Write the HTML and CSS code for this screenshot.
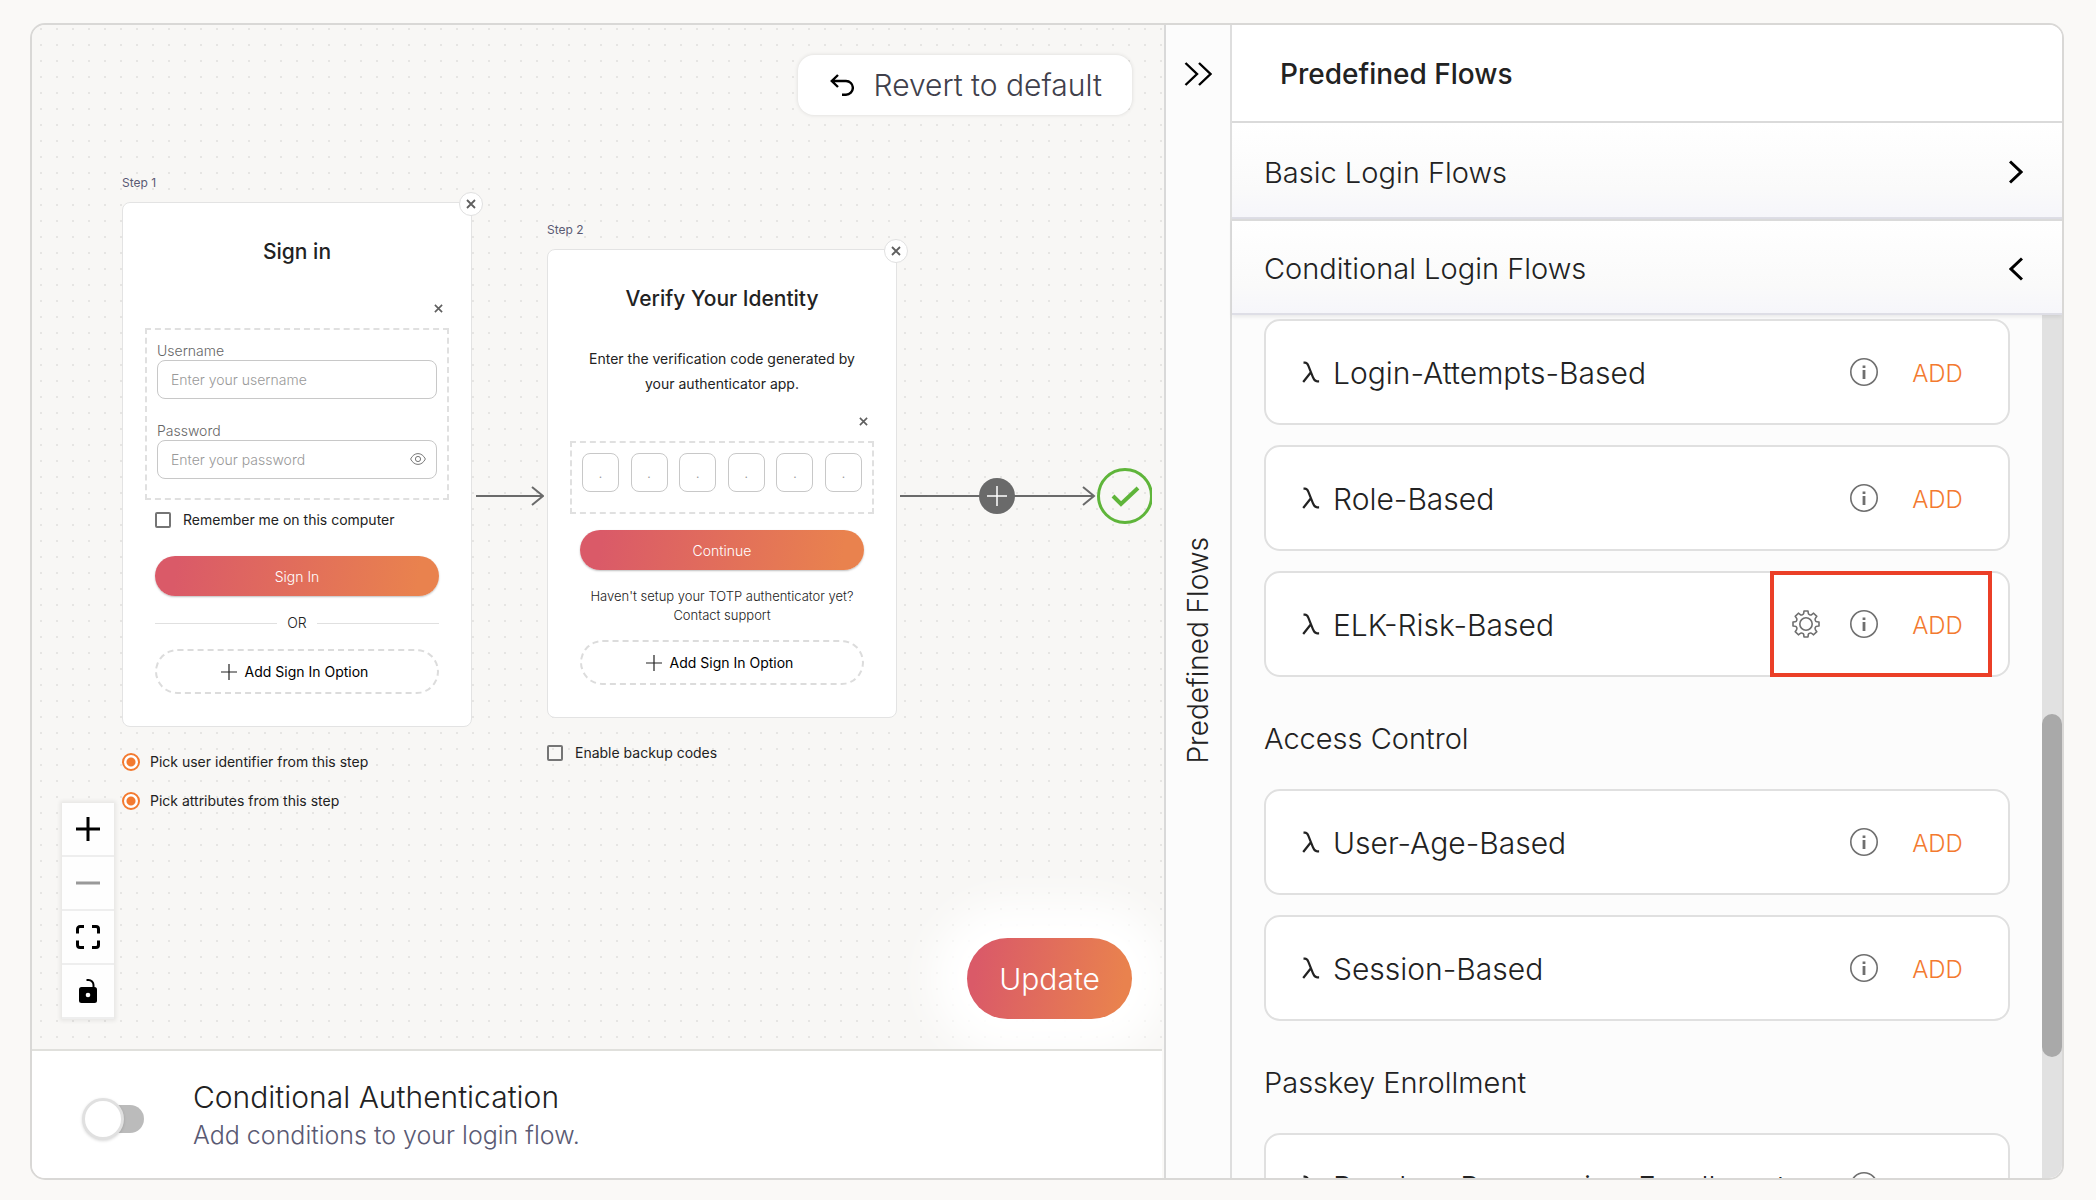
FILE: index.html
```html
<!DOCTYPE html>
<html lang="en">
<head>
<meta charset="utf-8">
<title>Login Flow</title>
<link rel="stylesheet" href="styles.css">
</head>
<body>
<svg class="defs" aria-hidden="true">
  <symbol id="cross" viewBox="0 0 10 10"><path d="M1 1l8 8M9 1l-8 8" fill="none" stroke="#5f5f5f" stroke-width="1.8"/></symbol>
  <symbol id="plus" viewBox="0 0 16 16"><path d="M8 0v16M0 8h16" fill="none" stroke="#222" stroke-width="1.2"/></symbol>
  <symbol id="lambda" viewBox="0 0 18 22"><path d="M1.5 1.6h1.4c1.7 0 2.6 1 3.4 3l4.6 11.600c1 2.600 2.200 4.200 4.200 4.200h2M9.300 10.800L1.200 21" fill="none" stroke="#222" stroke-width="2.200"/></symbol>
  <symbol id="info" viewBox="0 0 28 28"><circle cx="14" cy="14" r="13.200" fill="none" stroke="#6f6f6f" stroke-width="1.600"/><path d="M14 12v9M14 7.400v2.600" stroke="#6f6f6f" stroke-width="2.800"/></symbol>
  <symbol id="gear" viewBox="0 0 28 28"><path d="M11.700 3.300L12 1h4l.3 2.300c0 .8.600 1.200 1.300 1.400.8.300 1.500.4 2.100-.1l1.900-1.400 3.200 3.200-1.400 1.900c-.5.600-.4 1.300-.1 2.100.2.700.6 1.300 1.400 1.300L27 12v4l-2.300.3c-.8 0-1.200.6-1.400 1.300-.3.800-.4 1.500.1 2.100l1.400 1.900-3.200 3.200-1.900-1.400c-.6-.5-1.300-.4-2.100-.1-.7.200-1.300.6-1.300 1.400L16 27h-4l-.3-2.300c0-.8-.6-1.200-1.300-1.400-.8-.3-1.500-.4-2.100.1l-1.900 1.400-3.200-3.200 1.400-1.900c.5-.6.4-1.300.1-2.100-.2-.7-.6-1.300-1.400-1.300L1 16v-4l2.300-.3c.8 0 1.200-.6 1.400-1.300.3-.8.4-1.500-.1-2.100L3.200 6.400l3.200-3.200 1.900 1.400c.6.500 1.300.4 2.100.1.700-.2 1.300-.6 1.300-1.400z" fill="none" stroke="#6f6f6f" stroke-width="1.600" stroke-linejoin="round"/><circle cx="14" cy="14" r="6.200" fill="none" stroke="#6f6f6f" stroke-width="1.600"/></symbol>
</svg>

<main class="builder">
  <section class="workspace">
    <div class="canvas">
      <svg class="edge edge-first" width="68" height="20" viewBox="0 0 68 20" fill="none" stroke="#6a6a6a" stroke-width="2"><path d="M0 10h67M56 1l11 9-11 9"/></svg>
      <svg class="edge edge-last" width="252" height="58" viewBox="0 0 252 58" fill="none">
        <path d="M0 29h194M183 20l11 9-11 9" stroke="#6a6a6a" stroke-width="2"/>
        <circle cx="97" cy="29" r="18" fill="#6a6a6a"/>
        <path d="M97 19v20M87 29h20" stroke="#fff" stroke-width="1.500"/>
        <circle cx="225" cy="29" r="26.500" stroke="#5fb53a" stroke-width="3"/>
        <path d="M213 29l8 8 17-16" stroke="#5fb53a" stroke-width="4"/>
      </svg>

      <article class="step step-one">
        <p class="step-label">Step 1</p>
        <form class="card">
          <button type="button" class="close" aria-label="Remove step"><svg width="10" height="10"><use href="#cross"/></svg></button>
          <h2 class="card-title">Sign in</h2>
          <div class="remove-row"><button type="button" class="remove" aria-label="Remove option"><svg width="9" height="9"><use href="#cross"/></svg></button></div>
          <div class="option">
            <label class="field-label" for="user">Username</label>
            <input class="field" id="user" type="text" placeholder="Enter your username">
            <label class="field-label field-next" for="pass">Password</label>
            <div class="field-wrap">
              <input class="field" id="pass" type="password" placeholder="Enter your password">
              <svg class="eye" width="16" height="12" viewBox="0 0 16 12" fill="none" stroke="#777"><path d="M.6 6C2.500 2.400 5 .6 8 .6S13.500 2.400 15.400 6C13.500 9.600 11 11.400 8 11.400S2.500 9.600.6 6z"/><circle cx="8" cy="6" r="2.600"/></svg>
            </div>
          </div>
          <label class="check remember"><input type="checkbox">Remember me on this computer</label>
          <button type="button" class="primary primary-signin">Sign In</button>
          <div class="or">OR</div>
          <button type="button" class="add-option"><svg width="16" height="16"><use href="#plus"/></svg>Add Sign In Option</button>
        </form>
        <div class="step-options">
          <label class="check"><input type="radio" name="identifier" checked>Pick user identifier from this step</label>
          <label class="check"><input type="radio" name="attributes" checked>Pick attributes from this step</label>
        </div>
      </article>

      <article class="step step-two">
        <p class="step-label">Step 2</p>
        <form class="card">
          <button type="button" class="close" aria-label="Remove step"><svg width="10" height="10"><use href="#cross"/></svg></button>
          <h2 class="card-title">Verify Your Identity</h2>
          <p class="lead">Enter the verification code generated by<br>your authenticator app.</p>
          <div class="remove-row remove-code"><button type="button" class="remove" aria-label="Remove option"><svg width="9" height="9"><use href="#cross"/></svg></button></div>
          <div class="option code">
            <input class="digit" aria-label="Digit 1" placeholder=".">
            <input class="digit" aria-label="Digit 2" placeholder=".">
            <input class="digit" aria-label="Digit 3" placeholder=".">
            <input class="digit" aria-label="Digit 4" placeholder=".">
            <input class="digit" aria-label="Digit 5" placeholder=".">
            <input class="digit" aria-label="Digit 6" placeholder=".">
          </div>
          <button type="button" class="primary">Continue</button>
          <p class="note">Haven't setup your TOTP authenticator yet?<br>Contact support</p>
          <button type="button" class="add-option"><svg width="16" height="16"><use href="#plus"/></svg>Add Sign In Option</button>
        </form>
        <div class="step-options">
          <label class="check"><input type="checkbox">Enable backup codes</label>
        </div>
      </article>

      <button type="button" class="revert">
        <svg width="24" height="22" viewBox="0 0 24 22" fill="none" stroke="#000" stroke-width="2.400"><path d="M8 1L1.800 7 8 13M1.800 7H16a6.800 6.800 0 0 1 0 13.700h-4"/></svg>
        Revert to default
      </button>

      <div class="controls">
        <button type="button" aria-label="Zoom in"><svg width="24" height="24" viewBox="0 0 24 24"><path d="M12 0v24M0 12h24" stroke="#000" stroke-width="3"/></svg></button>
        <button type="button" aria-label="Zoom out"><svg width="24" height="24" viewBox="0 0 24 24"><path d="M0 12h24" stroke="#999" stroke-width="3"/></svg></button>
        <button type="button" aria-label="Fit view"><svg width="24" height="24" viewBox="0 0 24 24" fill="none" stroke="#000" stroke-width="3"><path d="M1.500 8.500V4a2.500 2.500 0 0 1 2.500-2.500h4M16 1.500h4A2.500 2.500 0 0 1 22.500 4v4.500M22.500 15.500V20a2.500 2.500 0 0 1-2.500 2.500h-4M8 22.500H4A2.500 2.500 0 0 1 1.500 20v-4.500"/></svg></button>
        <button type="button" aria-label="Unlock"><svg width="20" height="24" viewBox="0 0 20 24"><rect x="1" y="8" width="18" height="16" rx="2.500"/><circle cx="10" cy="16" r="2.300" fill="#fff"/><path d="M8.500 1h2a5 5 0 0 1 5 5v3" fill="none" stroke="#000" stroke-width="2"/></svg></button>
      </div>

      <button type="button" class="update">Update</button>
    </div>

    <div class="conditional">
      <input class="switch" type="checkbox" role="switch" id="conditional">
      <label for="conditional">
        <span class="conditional-title">Conditional Authentication</span>
        <span class="conditional-text">Add conditions to your login flow.</span>
      </label>
    </div>
  </section>

  <aside class="panel">
    <div class="rail">
      <button type="button" class="collapse" aria-label="Collapse panel"><svg width="28" height="24" viewBox="0 0 28 24" fill="none" stroke="#000" stroke-width="2.400"><path d="M1.500 1L13 12 1.500 23M15 1l11.500 11L15 23"/></svg></button>
      <span class="rail-title">Predefined Flows</span>
    </div>
    <div class="flows">
      <h1 class="flows-title">Predefined Flows</h1>
      <button type="button" class="group">Basic Login Flows<svg width="14" height="24" viewBox="0 0 14 24" fill="none" stroke="#000" stroke-width="3"><path d="M1 1.500L12 12 1 22.500"/></svg></button>
      <button type="button" class="group group-open">Conditional Login Flows<svg width="14" height="24" viewBox="0 0 14 24" fill="none" stroke="#000" stroke-width="3"><path d="M13 1.500L2 12 13 22.500"/></svg></button>
      <div class="scroller">
        <div class="list">
          <div class="flow"><svg width="18" height="22"><use href="#lambda"/></svg><span class="flow-name">Login-Attempts-Based</span><svg width="28" height="28"><use href="#info"/></svg><button type="button" class="add">ADD</button></div>
          <div class="flow"><svg width="18" height="22"><use href="#lambda"/></svg><span class="flow-name">Role-Based</span><svg width="28" height="28"><use href="#info"/></svg><button type="button" class="add">ADD</button></div>
          <div class="flow"><svg width="18" height="22"><use href="#lambda"/></svg><span class="flow-name">ELK-Risk-Based</span><svg width="28" height="28"><use href="#gear"/></svg><svg width="28" height="28"><use href="#info"/></svg><button type="button" class="add">ADD</button><span class="marker"></span></div>
          <h2 class="list-title">Access Control</h2>
          <div class="flow"><svg width="18" height="22"><use href="#lambda"/></svg><span class="flow-name">User-Age-Based</span><svg width="28" height="28"><use href="#info"/></svg><button type="button" class="add">ADD</button></div>
          <div class="flow"><svg width="18" height="22"><use href="#lambda"/></svg><span class="flow-name">Session-Based</span><svg width="28" height="28"><use href="#info"/></svg><button type="button" class="add">ADD</button></div>
          <h2 class="list-title">Passkey Enrollment</h2>
          <div class="flow"><svg width="18" height="22"><use href="#lambda"/></svg><span class="flow-name">Passkey-Progressive-Enrollment</span><svg width="28" height="28"><use href="#info"/></svg><button type="button" class="add">ADD</button></div>
        </div>
        <div class="track"><div class="thumb"></div></div>
      </div>
    </div>
  </aside>
</main>
</body>
</html>
```
FILE: styles.css
```css
*, *::before, *::after { box-sizing: border-box; }

body {
  margin: 0;
  height: 100vh;
  padding: 23px 32px 20px 30px;
  background: #faf9f7;
  color: #222;
  font-family: Inter, "Liberation Sans", sans-serif;
  font-weight: 300;
}

h1, h2, p { margin: 0; font-weight: 300; }
button, input { font: inherit; color: inherit; }
button { border: 0; padding: 0; background: none; cursor: pointer; }
svg { display: block; flex: none; }
.defs { position: absolute; width: 0; height: 0; }

.builder {
  display: grid;
  grid-template-columns: minmax(0, 566fr) minmax(0, 449fr);
  grid-template-rows: minmax(0, 1fr);
  height: 100%;
  border: 2px solid #d9d8d6;
  border-radius: 15px;
  overflow: hidden;
}

/* Canvas */
.workspace { display: flex; flex-direction: column; min-height: 0; }
.canvas {
  position: relative;
  flex: 1;
  overflow: hidden;
  background: #f8f7f5 radial-gradient(circle, #e6e5e3 1px, transparent 1px) 1px -4px / 16px 16px;
}
.edge { position: absolute; }
.edge-first { left: 444px; top: 461px; }
.edge-last { left: 868px; top: 442px; }

.step { position: absolute; width: 350px; font-size: 14px; }
.step-one { left: 90px; top: 149px; }
.step-two { left: 515px; top: 196px; }
.step-label { padding-top: 1px; margin-bottom: 11px; font-size: 12px; line-height: 16px; color: #5a5a73; font-weight: 400; }
.card {
  position: relative;
  display: flex;
  flex-direction: column;
  padding: 33px 22px 32px;
  background: #fff;
  border: 1px solid #e3e3e3;
  border-radius: 8px;
}
.close {
  position: absolute;
  top: -11px;
  right: -12px;
  display: grid;
  place-items: center;
  width: 24px;
  height: 24px;
  border: 1px solid #e0e0e0;
  border-radius: 50%;
  background: #fff;
}
.card-title { font-size: 21px; line-height: 32px; font-weight: 500; text-align: center; }
.remove-row { display: flex; justify-content: flex-end; height: 20px; margin: 30px 6px 10px; }
.remove-code { margin-top: 15px; }
.option { padding: 12px 10px 19px; border: 2px dashed #e0e0e0; }
.field-label { display: block; font-size: 14px; line-height: 18px; color: #666; }
.field-next { margin-top: 23px; }
.field {
  display: block;
  width: 100%;
  height: 39px;
  padding: 0 13px;
  border: 1px solid #c8c8c8;
  border-radius: 8px;
  background: #fff;
}
.field::placeholder, .digit::placeholder { color: #999; opacity: 1; }
.field-wrap { position: relative; }
.eye { position: absolute; right: 11px; top: 13px; }

.check { display: flex; align-items: center; gap: 12px; line-height: 20px; font-weight: 400; }
.check input { flex: none; appearance: none; width: 16px; height: 16px; margin: 0; border: 2px solid #757575; border-radius: 2px; }
.check input[type="radio"] {
  width: 18px;
  height: 18px;
  margin-right: -2px;
  border-color: #f37a30;
  border-radius: 50%;
  background: radial-gradient(circle, #f37a30 4px, #fff 5px);
}
.remember { margin: 10px 10px 26px; }
.step-options { display: flex; flex-direction: column; gap: 19px; margin-top: 25px; }

.primary {
  height: 40px;
  margin: 16px 10px 0;
  border-radius: 20px;
  background: linear-gradient(100deg, #da5a68 8%, #e9824e 92%);
  color: #fff;
  box-shadow: 0 1px 2px rgba(0, 0, 0, .25);
}
.primary-signin { margin-top: 0; }
.or { display: flex; align-items: center; gap: 10px; margin: 17px 10px 16px; line-height: 20px; }
.or::before, .or::after { content: ""; flex: 1; height: 1px; background: #e0e0e0; }
.add-option {
  display: flex;
  align-items: center;
  justify-content: center;
  gap: 8px;
  height: 45px;
  margin: 0 10px;
  padding-right: 5px;
  border: 2px dashed #dcdcdc;
  border-radius: 23px;
  color: #000;
  font-weight: 400;
}
.lead { margin-top: 31px; line-height: 25px; text-align: center; font-weight: 400; }
.note { margin: 17px 0 15px; font-size: 13px; line-height: 19px; text-align: center; }
.code { display: flex; justify-content: space-between; padding: 10px 10px 20px; }
.digit { width: 37px; height: 39px; padding: 0; border: 1px solid #c8c8c8; border-radius: 8px; text-align: center; }

.revert {
  position: absolute;
  top: 30px;
  right: 32px;
  display: flex;
  align-items: center;
  gap: 20px;
  height: 60px;
  padding: 0 30px 0 32px;
  border-radius: 16px;
  background: #fff;
  color: #40404b;
  font-size: 30px;
  box-shadow: 0 0 4px rgba(0, 0, 0, .12);
}
.controls {
  position: absolute;
  left: 30px;
  bottom: 30px;
  width: 52px;
  box-shadow: 0 0 4px 2px rgba(0, 0, 0, .07);
}
.controls button {
  display: grid;
  place-items: center;
  width: 100%;
  height: 54px;
  background: #fefefe;
  border-bottom: 2px solid #eee;
}
.update {
  position: absolute;
  right: 32px;
  bottom: 30px;
  height: 81px;
  padding: 0 32px;
  border-radius: 41px;
  background: linear-gradient(100deg, #da5a68 8%, #e9824e 92%);
  color: #fff;
  font-size: 30px;
  box-shadow: 0 0 40px 36px #fff;
}

.conditional {
  display: flex;
  align-items: center;
  gap: 49px;
  height: 129px;
  margin-right: 2px;
  padding-left: 50px;
  border-top: 2px solid #e0e0dc;
  background: #fff;
}
.switch {
  appearance: none;
  display: flex;
  align-items: center;
  width: 62px;
  height: 28px;
  margin: 9px 0 0;
  border-radius: 14px;
  background: linear-gradient(#bbb, #bbb) right / 42px 28px no-repeat;
}
.switch::before {
  content: "";
  flex: none;
  width: 42px;
  height: 42px;
  border: 3px solid #e0e0e0;
  border-radius: 50%;
  background: #fff;
  box-shadow: 0 1px 3px rgba(0, 0, 0, .15);
}
.conditional-title, .conditional-text { display: block; }
.conditional-title { font-size: 30px; line-height: 40px; }
.conditional-text { font-size: 25px; line-height: 36px; color: #5a5a73; }

/* Side panel */
.panel { display: flex; min-height: 0; border-left: 2px solid #d9d9d9; background: #fcfcfc; }
.rail {
  display: flex;
  flex-direction: column;
  align-items: center;
  width: 66px;
  padding-top: 37px;
  border-right: 2px solid #dedede;
}
.rail-title {
  margin: auto 0;
  padding-bottom: 36px;
  writing-mode: vertical-rl;
  transform: rotate(180deg);
  font-size: 28px;
  line-height: 36px;
}
.flows { flex: 1; display: flex; flex-direction: column; min-width: 0; }
.flows-title {
  height: 98px;
  padding-left: 48px;
  border-bottom: 2px solid #dadada;
  background: #fff;
  font-size: 28px;
  line-height: 98px;
  font-weight: 500;
}
.group {
  display: flex;
  flex: none;
  align-items: center;
  justify-content: space-between;
  height: 96px;
  padding: 4px 39px 0 32px;
  border-bottom: 2px solid #dedee6;
  background: linear-gradient(#fff, #fafafa 70%, #f6f6fa);
  font-size: 29px;
}
.group-open { position: relative; border-top: 2px solid #dadada; padding-top: 3px; box-shadow: 0 2px 4px rgba(0, 0, 0, .08); }
.scroller { flex: 1; display: flex; min-height: 0; }
.list { flex: 1; min-width: 0; padding: 4px 32px 0; overflow: hidden; }
.flow {
  position: relative;
  display: flex;
  align-items: center;
  height: 106px;
  margin-bottom: 20px;
  padding: 0 45px 0 36px;
  border: 2px solid #e0e0e0;
  border-radius: 16px;
  background: #fff;
}
.flow-name { flex: 1; padding: 2px 0 0 13px; font-size: 30px; line-height: 36px; }
.flow svg + svg { margin-left: 30px; }
.add { width: 51px; margin-left: 34px; padding-top: 2px; color: #f37a30; font-size: 24px; }
.marker { position: absolute; inset: -2px 16px -2px auto; width: 222px; border: 4px solid #eb3f27; }
.list-title { margin: 46px 0 34px; font-size: 29px; line-height: 32px; }
.track { width: 20px; background: #e1e1e1; padding-top: 399px; }
.thumb { height: 343px; border-radius: 10px; background: #a9a9a9; }
```
